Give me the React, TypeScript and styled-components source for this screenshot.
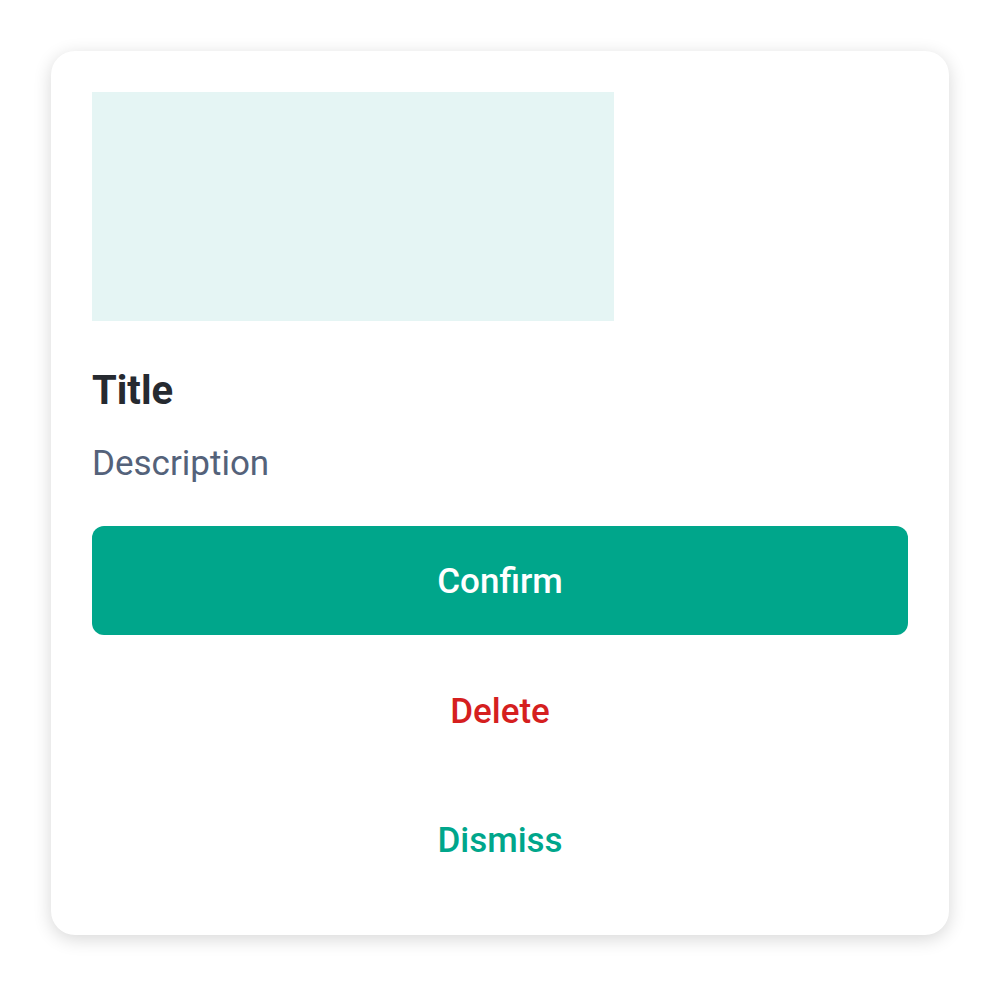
import styled, { createGlobalStyle } from 'styled-components';

const GlobalStyle = createGlobalStyle`
  html, body {
    margin: 0;
    padding: 0;
    background: #ffffff;
    font-family: Roboto, "Noto Sans", Arial, sans-serif;
  }
`;

const Page = styled.main`
  width: 1000px;
  height: 986px;
  box-sizing: border-box;
  padding: 51px;
`;

const Card = styled.section`
  box-sizing: border-box;
  width: 898px;
  height: 884px;
  padding: 41px;
  border-radius: 24px;
  background: #fff;
  box-shadow: 0 4px 18px rgba(0, 0, 0, 0.16);
  display: flex;
  flex-direction: column;
`;

const Media = styled.div`
  width: 522px;
  height: 229px;
  flex-shrink: 0;
  background: #e5f5f4;
`;

const Title = styled.h2`
  margin: 45px 0 0;
  font-size: 40px;
  line-height: 50px;
  font-weight: 700;
  color: #262a30;
`;

const Description = styled.p`
  margin: 26px 0 0;
  font-size: 35px;
  line-height: 44px;
  color: #54627a;
`;

const Actions = styled.div`
  margin-top: 40px;
  display: flex;
  flex-direction: column;
  gap: 20px;
`;

const Button = styled.button<{ $variant: 'primary' | 'danger' | 'plain' }>`
  height: 109px;
  padding: ${(p) => (p.$variant === 'primary' ? '2px' : '4px')} 0 0;
  border: none;
  border-radius: 12px;
  font-family: inherit;
  font-size: 35px;
  font-weight: 500;
  cursor: pointer;
  background: ${(p) => (p.$variant === 'primary' ? '#00a68b' : 'transparent')};
  color: ${(p) =>
    p.$variant === 'primary' ? '#ffffff' : p.$variant === 'danger' ? '#d51f1f' : '#00a68b'};
`;

export default function App() {
  return (
    <>
      <GlobalStyle />
      <Page>
        <Card>
          <Media />
          <Title>Title</Title>
          <Description>Description</Description>
          <Actions>
            <Button $variant="primary">Confirm</Button>
            <Button $variant="danger">Delete</Button>
            <Button $variant="plain">Dismiss</Button>
          </Actions>
        </Card>
      </Page>
    </>
  );
}
